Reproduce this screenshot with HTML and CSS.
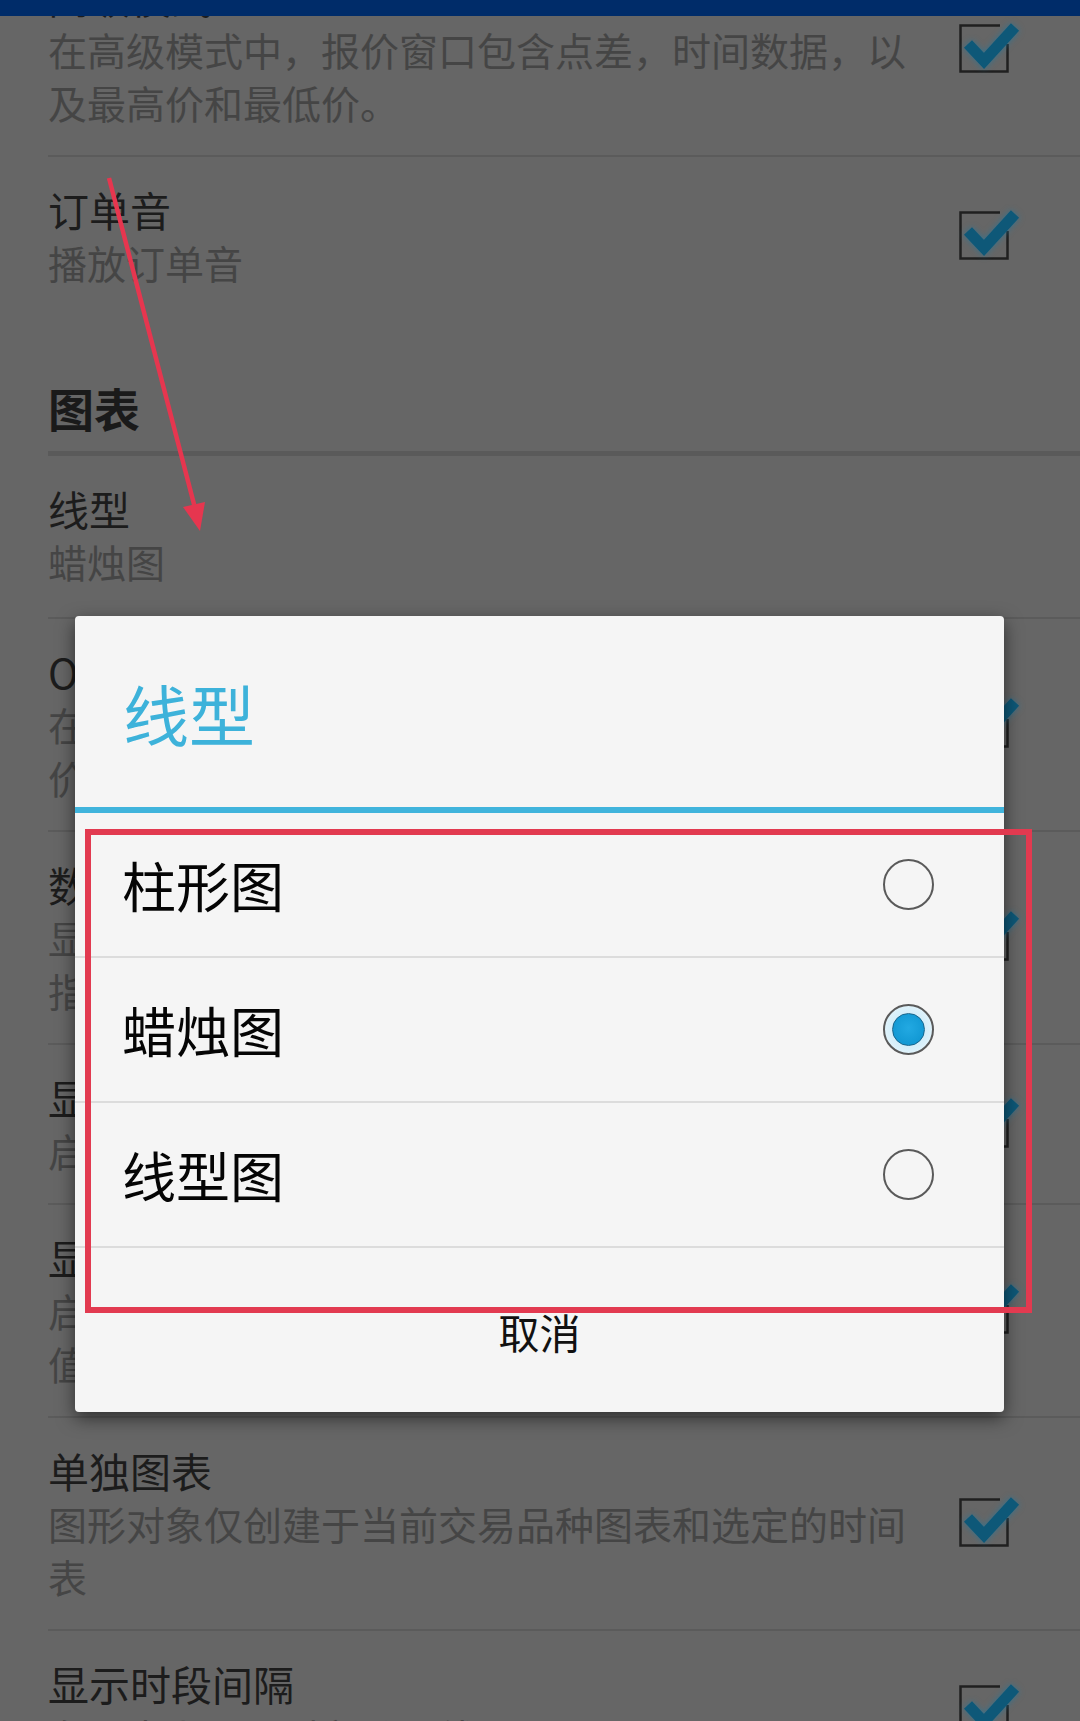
FILE: index.html
```html
<!DOCTYPE html>
<html lang="zh-CN">

<head>
    <meta charset="UTF-8">
    <meta name="viewport" content="width=device-width, initial-scale=1.0">
    <title>设置</title>
    <link rel="stylesheet" href="styles.css">
</head>

<body>
    <div class="screen">
        <div class="statusbar"></div>

        <div class="scroller">
            <div class="prefs">
                <div class="pref first">
                    <div class="text">
                        <div class="title">高级模式</div>
                        <div class="sum">在高级模式中，报价窗口包含点差，时间数据，以及最高价和最低价。</div>
                    </div>
                    <svg class="check" viewBox="0 0 60 52" width="60" height="52">
                        <path class="box" d="M41 2.5 H1.5 V48.5 H48.5 V21" />
                        <path class="tick" d="M9 21 L25 38 L56 4" />
                    </svg>
                </div>
                <div class="pref nodiv">
                    <div class="text">
                        <div class="title">订单音</div>
                        <div class="sum">播放订单音</div>
                    </div>
                    <svg class="check" viewBox="0 0 60 52" width="60" height="52">
                        <path class="box" d="M41 2.5 H1.5 V48.5 H48.5 V21" />
                        <path class="tick" d="M9 21 L25 38 L56 4" />
                    </svg>
                </div>

                <div class="category">图表</div>

                <div class="pref list-pref">
                    <div class="text">
                        <div class="title">线型</div>
                        <div class="sum">蜡烛图</div>
                    </div>
                </div>
                <div class="pref">
                    <div class="text">
                        <div class="title">OHLC</div>
                        <div class="sum">在图表左上角显示开盘价、最高价、最低价和收盘价</div>
                    </div>
                    <svg class="check" viewBox="0 0 60 52" width="60" height="52">
                        <path class="box" d="M41 2.5 H1.5 V48.5 H48.5 V21" />
                        <path class="tick" d="M9 21 L25 38 L56 4" />
                    </svg>
                </div>
                <div class="pref">
                    <div class="text">
                        <div class="title">数据窗口</div>
                        <div class="sum">显示数据窗口，窗口中包含所选柱形的价格与技术指标的数值</div>
                    </div>
                    <svg class="check" viewBox="0 0 60 52" width="60" height="52">
                        <path class="box" d="M41 2.5 H1.5 V48.5 H48.5 V21" />
                        <path class="tick" d="M9 21 L25 38 L56 4" />
                    </svg>
                </div>
                <div class="pref">
                    <div class="text">
                        <div class="title">显示交易水平</div>
                        <div class="sum">启用显示交易水平线</div>
                    </div>
                    <svg class="check" viewBox="0 0 60 52" width="60" height="52">
                        <path class="box" d="M41 2.5 H1.5 V48.5 H48.5 V21" />
                        <path class="tick" d="M9 21 L25 38 L56 4" />
                    </svg>
                </div>
                <div class="pref">
                    <div class="text">
                        <div class="title">显示成交量</div>
                        <div class="sum">启用此选项后，在图表的单独窗口中显示成交量数值</div>
                    </div>
                    <svg class="check" viewBox="0 0 60 52" width="60" height="52">
                        <path class="box" d="M41 2.5 H1.5 V48.5 H48.5 V21" />
                        <path class="tick" d="M9 21 L25 38 L56 4" />
                    </svg>
                </div>
                <div class="pref">
                    <div class="text">
                        <div class="title">单独图表</div>
                        <div class="sum">图形对象仅创建于当前交易品种图表和选定的时间表</div>
                    </div>
                    <svg class="check" viewBox="0 0 60 52" width="60" height="52">
                        <path class="box" d="M41 2.5 H1.5 V48.5 H48.5 V21" />
                        <path class="tick" d="M9 21 L25 38 L56 4" />
                    </svg>
                </div>
                <div class="pref">
                    <div class="text">
                        <div class="title">显示时段间隔</div>
                        <div class="sum">在图表上显示时段分隔线</div>
                    </div>
                    <svg class="check" viewBox="0 0 60 52" width="60" height="52">
                        <path class="box" d="M41 2.5 H1.5 V48.5 H48.5 V21" />
                        <path class="tick" d="M9 21 L25 38 L56 4" />
                    </svg>
                </div>
            </div>
        </div>

        <!-- list dialog -->
        <div class="dialog">
            <div class="dlg-title">线型</div>
            <div class="dlg-rule"></div>
            <div class="dlg-list">
                <div class="option">
                    <span>柱形图</span>
                    <span class="radio"></span>
                </div>
                <div class="option">
                    <span>蜡烛图</span>
                    <span class="radio on"></span>
                </div>
                <div class="option">
                    <span>线型图</span>
                    <span class="radio"></span>
                </div>
            </div>
            <div class="dlg-actions">取消</div>
        </div>

        <!-- annotations -->
        <div class="mark"></div>
        <svg class="arrow" width="1080" height="600" viewBox="0 0 1080 600">
            <line x1="109" y1="178" x2="195" y2="508" />
            <polygon points="200,531 183,507 205,502" />
        </svg>
    </div>
</body>

</html>
```

FILE: styles.css
```css
* {
    margin: 0;
    padding: 0;
    box-sizing: border-box;
}

body {
    background-color: #666666;
    font-family: "Noto Sans CJK SC", "Noto Sans", sans-serif;
}

.screen {
    position: relative;
    width: 1080px;
    height: 1721px;
    overflow: hidden;
    background-color: #666666;
}

.statusbar {
    height: 16px;
    background-color: #002c69;
}

.scroller {
    height: 1705px;
    overflow: hidden;
}

.prefs {
    margin-top: -72px;
}

.pref {
    display: flex;
    align-items: center;
    margin-left: 48px;
    padding: 25px 0 26px 0;
    border-bottom: 2px solid #5b5b5b;
}

.pref.nodiv {
    border-bottom: none;
}

.pref.list-pref {
    padding-bottom: 29px;
}

.text {
    width: 862px;
}

.title {
    font-size: 41px;
    line-height: 54px;
    color: #1c1c1c;
}

.sum {
    font-size: 39px;
    line-height: 53px;
    color: #454545;
}

.check {
    margin-left: auto;
    margin-right: 61px;
    flex-shrink: 0;
    overflow: visible;
}

.check .box {
    fill: none;
    stroke: #202020;
    stroke-width: 2.5;
}

.check .tick {
    fill: none;
    stroke: #0e5878;
    stroke-width: 11;
    stroke-linejoin: miter;
    filter: drop-shadow(0 0 3px rgba(30, 120, 160, 0.7));
}

.category {
    margin-left: 48px;
    padding: 65px 0 17px 0;
    font-size: 46px;
    line-height: 54px;
    font-weight: bold;
    color: #1a1a1a;
    border-bottom: 5px solid #5a5a5a;
}

/* dialog */
.dialog {
    position: absolute;
    left: 75px;
    top: 616px;
    width: 929px;
    height: 796px;
    background-color: #f5f5f5;
    border-radius: 4px;
    box-shadow: 0 6px 18px rgba(0, 0, 0, 0.55);
    display: flex;
    flex-direction: column;
}

.dlg-title {
    height: 191px;
    padding: 0 0 0 48px;
    display: flex;
    align-items: center;
    font-size: 66px;
    color: #3db2da;
}

.dlg-rule {
    height: 6px;
    background-color: #40b4dc;
}

.option {
    height: 145px;
    display: flex;
    align-items: center;
    justify-content: space-between;
    padding: 0 70px 0 47px;
    border-bottom: 2px solid #dcdcdc;
    font-size: 54px;
    color: #050505;
}

.radio {
    width: 51px;
    height: 51px;
    border: 2px solid #5a5a5a;
    border-radius: 50%;
    display: flex;
    align-items: center;
    justify-content: center;
}

.radio.on {
    background: radial-gradient(circle, #bfe5f5 0, #d9f0fa 60%, #f2f9fc 100%);
}

.radio.on::after {
    content: "";
    width: 31px;
    height: 31px;
    border-radius: 50%;
    border: 1.5px solid #17658c;
    background: radial-gradient(circle at 50% 45%, #22a9e2 0, #1299d4 70%, #0e86be 100%);
}

.dlg-actions {
    flex: 1;
    display: flex;
    align-items: center;
    justify-content: center;
    padding-top: 2px;
    font-size: 41px;
    color: #111111;
}

/* red annotations */
.mark {
    position: absolute;
    left: 85px;
    top: 829px;
    width: 947px;
    height: 484px;
    border: 6px solid #e23a50;
}

.arrow {
    position: absolute;
    left: 0;
    top: 0;
}

.arrow line {
    stroke: #e6364f;
    stroke-width: 4.5;
}

.arrow polygon {
    fill: #e6364f;
}
```
